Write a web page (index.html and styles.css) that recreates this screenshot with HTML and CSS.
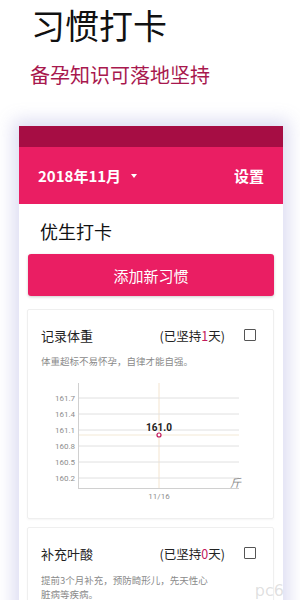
FILE: index.html
```html
<!DOCTYPE html>
<html lang="zh">
<head>
<meta charset="utf-8">
<link rel="stylesheet" href="styles.css">
</head>
<body>
<div class="hero">
  <h1 class="title">习惯打卡</h1>
  <p class="subtitle">备孕知识可落地坚持</p>
</div>
<div class="phone">
  <div class="statusbar"></div>
  <div class="appbar">
    <div class="month">2018年11月 <span class="caret"></span></div>
    <div class="settings">设置</div>
  </div>
  <div class="content">
    <div class="section-title">优生打卡</div>
    <div class="add-btn">添加新习惯</div>
    <div class="card">
      <div class="card-head">
        <span class="habit">记录体重</span>
        <span class="streak">(已坚持<em>1</em>天)</span>
        <span class="check"></span>
      </div>
      <p class="desc">体重超标不易怀孕，自律才能自强。</p>
      <svg class="chart" width="219" height="119" viewBox="0 0 219 119">
        <line x1="118" y1="0" x2="118" y2="105" stroke="#f3e4cf" stroke-width="1"/>
        <line x1="37.5" y1="15" x2="198" y2="15" stroke="#e0e0e0"/>
        <line x1="37.5" y1="31" x2="198" y2="31" stroke="#e0e0e0"/>
        <line x1="37.5" y1="47" x2="198" y2="47" stroke="#e0e0e0"/>
        <line x1="37.5" y1="52" x2="198" y2="52" stroke="#f3e9d6"/>
        <line x1="37.5" y1="63" x2="198" y2="63" stroke="#e0e0e0"/>
        <line x1="37.5" y1="79" x2="198" y2="79" stroke="#e0e0e0"/>
        <line x1="37.5" y1="95" x2="198" y2="95" stroke="#e0e0e0"/>
        <line x1="37.5" y1="0" x2="37.5" y2="105.5" stroke="#d0d0d0"/>
        <line x1="37" y1="105.5" x2="198" y2="105.5" stroke="#d0d0d0"/>
        <g class="ylab" font-size="8" fill="#8e8e8e" text-anchor="end">
          <text x="34" y="18">161.7</text>
          <text x="34" y="34">161.4</text>
          <text x="34" y="50">161.1</text>
          <text x="34" y="66">160.8</text>
          <text x="34" y="82">160.5</text>
          <text x="34" y="98">160.2</text>
        </g>
        <text x="118" y="47.5" font-size="10" font-weight="bold" fill="#222" text-anchor="middle">161.0</text>
        <circle cx="118" cy="52" r="2" fill="#fff" stroke="#c2185b" stroke-width="1.2"/>
        <text x="189" y="104" font-size="11" fill="#888" font-style="italic">斤</text>
        <text x="118" y="116" font-size="8" fill="#8e8e8e" text-anchor="middle">11/16</text>
      </svg>
    </div>
    <div class="card card-2">
      <div class="card-head">
        <span class="habit">补充叶酸</span>
        <span class="streak">(已坚持<em>0</em>天)</span>
        <span class="check"></span>
      </div>
      <p class="desc">提前3个月补充，预防畸形儿，先天性心脏病等疾病。</p>
    </div>
  </div>
</div>
<div class="watermark">pc6</div>
</body>
</html>
```

FILE: styles.css
```css
html, body {
  margin: 0;
  padding: 0;
  height: 600px;
  overflow: hidden;
}
body {
  background: #ffffff;
  font-family: "Noto Sans CJK SC", "Noto Sans", sans-serif;
  position: relative;
}
.hero {
  padding: 4px 0 0 31px;
}
.title {
  margin: 0;
  font-size: 34px;
  line-height: 42px;
  font-weight: 400;
  color: #111;
}
.subtitle {
  margin: 15px 0 0 -1px;
  font-size: 20px;
  line-height: 28px;
  color: #a8184e;
}
.phone {
  margin: 37px 17px 0 19px;
  width: 264px;
  height: 500px;
  background: #fff;
  box-shadow: 0 0 16px 6px rgba(215, 215, 240, 0.85);
}
.statusbar {
  height: 21px;
  background: #a60d44;
}
.appbar {
  height: 57px;
  background: #ea1e63;
  display: flex;
  align-items: center;
  justify-content: space-between;
  padding: 0 19px;
  color: #fff;
  font-size: 15px;
  font-weight: 700;
}
.month {
  display: flex;
  align-items: center;
}
.caret {
  display: inline-block;
  width: 0;
  height: 0;
  margin-left: 10px;
  border-left: 3.5px solid transparent;
  border-right: 3.5px solid transparent;
  border-top: 4px solid #fff;
}
.content {
  padding: 13px 9px 0 8px;
}
.section-title {
  font-size: 18px;
  line-height: 28px;
  padding-left: 13px;
  color: #111;
}
.add-btn {
  margin: 9px 0 0 1px;
  height: 42px;
  border-radius: 3px;
  background: #ea1e63;
  color: #fff;
  font-size: 15px;
  display: flex;
  align-items: center;
  justify-content: center;
  box-shadow: 0 1px 3px rgba(0, 0, 0, 0.2);
}
.card {
  margin-top: 13px;
  border: 1px solid #efefef;
  border-radius: 2px;
  padding: 15px 17px 16px 13px;
  box-shadow: 0 1px 2px rgba(0, 0, 0, 0.04);
}
.card-2 {
  margin-top: 8px;
}
.card-head {
  display: flex;
  align-items: center;
  height: 20px;
}
.habit {
  font-size: 13px;
  color: #222;
  flex: 1;
}
.streak {
  font-size: 12.5px;
  color: #222;
}
.streak em {
  font-style: normal;
  color: #c2185b;
}
.check {
  width: 10px;
  height: 10px;
  border: 1.5px solid #555;
  border-radius: 1px;
  margin-left: 19px;
}
.desc {
  margin: 9px 0 0;
  font-size: 9.5px;
  line-height: 14px;
  color: #8a8a8a;
  max-width: 175px;
}
.card-2 .desc {
  margin-top: 10px;
}
.chart {
  display: block;
  margin-top: 15px;
  font-family: "Roboto", "Noto Sans CJK SC", sans-serif;
}
.watermark {
  position: absolute;
  right: 16px;
  bottom: 0;
  font-size: 16px;
  color: rgba(150, 150, 150, 0.3);
  font-family: "DejaVu Sans", sans-serif;
}
```
